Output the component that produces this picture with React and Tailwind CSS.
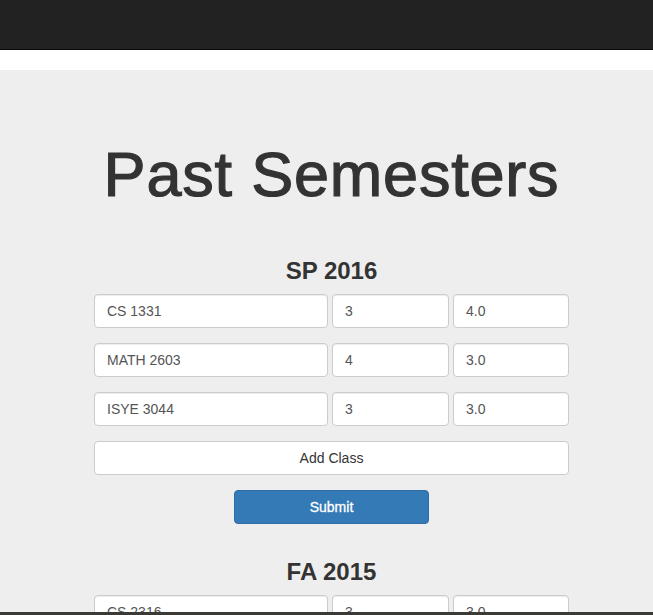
import React from "react";

const font = { fontFamily: '"Liberation Sans", Arial, Helvetica, sans-serif' };

function Field({ value, className }) {
  return (
    <div
      className={`h-[34px] flex items-center pl-[12px] bg-white border border-[#ccc] rounded-[4px] shadow-[inset_0_1px_1px_rgba(0,0,0,0.075)] text-[14px] text-[#555] ${className}`}
    >
      {value}
    </div>
  );
}

function Row({ name, credits, grade }) {
  return (
    <div className="flex gap-[4px]">
      <Field value={name} className="w-[234px]" />
      <Field value={credits} className="w-[117px]" />
      <Field value={grade} className="w-[116px]" />
    </div>
  );
}

export default function App() {
  return (
    <div style={font} className="min-h-[615px] bg-white overflow-hidden">
      <div className="h-[50px] bg-[#222] border-b border-[#080808]" />
      <div className="mt-[20px] bg-[#eee] min-h-[545px] pt-[70px]">
        <h1 className="text-[63px] leading-[69px] text-[#333] text-center pl-[10px] m-0 tracking-[0.8px] [-webkit-text-stroke:1.2px_#333]">
          Past Semesters
        </h1>
        <div className="ml-[94px] w-[475px]">
          <h3 className="mt-[49px] text-[24px] leading-[26px] font-bold text-[#333] text-center">
            SP 2016
          </h3>
          <div className="mt-[10px] flex flex-col gap-[15px]">
            <Row name="CS 1331" credits="3" grade="4.0" />
            <Row name="MATH 2603" credits="4" grade="3.0" />
            <Row name="ISYE 3044" credits="3" grade="3.0" />
            <div className="h-[34px] flex items-center justify-center bg-white border border-[#ccc] rounded-[4px] text-[14px] text-[#333]">
              Add Class
            </div>
          </div>
          <div className="mt-[15px] flex justify-center">
            <div className="w-[195px] h-[34px] flex items-center justify-center bg-[#337ab7] border border-[#2e6da4] rounded-[4px] text-[14px] text-white [-webkit-text-stroke:0.3px_#fff]">
              Submit
            </div>
          </div>
          <h3 className="mt-[35px] text-[24px] leading-[26px] font-bold text-[#333] text-center">
            FA 2015
          </h3>
          <div className="mt-[10px] flex flex-col gap-[15px]">
            <Row name="CS 2316" credits="3" grade="3.0" />
          </div>
        </div>
      </div>
      <div className="fixed left-0 right-0 top-[612px] h-[3px] bg-[#3b3a35]" />
    </div>
  );
}
